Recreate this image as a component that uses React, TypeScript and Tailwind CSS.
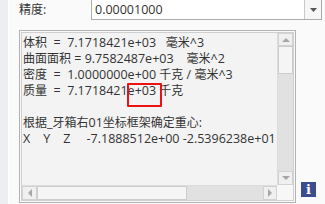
import React from "react";

const lines = [
  "体积  =  7.1718421e+03   毫米^3",
  "曲面面积 = 9.7582487e+03    毫米^2",
  "密度  =  1.0000000e+00 千克 / 毫米^3",
  "质量  =  7.1718421e+03 千克",
  "",
  "根据_牙箱右01坐标框架确定重心:",
  "X    Y    Z     -7.1888512e+00 -2.5396238e+01",
];

// CJK runs keep 12px, latin runs are slightly larger like the original UI font
function Mixed({ text }: { text: string }) {
  const parts = text.split(/([\u3400-\u9fff\uff00-\uffef]+)/);
  return (
    <>
      {parts.map((p, i) =>
        /[\u3400-\u9fff\uff00-\uffef]/.test(p) ? (
          <span key={i} className="text-[12px]">
            {p}
          </span>
        ) : (
          <span key={i}>{p}</span>
        )
      )}
    </>
  );
}

function Arrow({ dir }: { dir: "up" | "down" | "left" | "right" }) {
  const pts = {
    up: "0,5 4,1 8,5",
    down: "0,1 4,5 8,1",
    left: "5,0 1,4 5,8",
    right: "1,0 5,4 1,8",
  }[dir];
  const vertical = dir === "up" || dir === "down";
  return (
    <svg width={vertical ? 8 : 6} height={vertical ? 6 : 8} viewBox={vertical ? "0 0 8 6" : "0 0 6 8"}>
      <polygon points={pts} fill="#a6a6a6" />
    </svg>
  );
}

export default function App() {
  return (
    <div
      className="relative flex h-[204px] w-[325px] overflow-hidden bg-[#fafafa] text-[12.5px] text-[#333333]"
      style={{ fontFamily: '"Open Sans", "Noto Sans CJK SC", sans-serif' }}
    >
      <div className="w-[9px] shrink-0 border-r border-white bg-[#eceef1]" />

      <div className="flex min-w-0 flex-1 flex-col">
        {/* precision row */}
        <div className="flex h-[20px] items-center">
          <span className="w-[82px] whitespace-pre pl-[10px] leading-[16px]">
            <Mixed text="精度:" />
          </span>
          <div className="-mt-[1px] flex h-[21px] w-[231px] border border-[#acacac] bg-white">
            <span className="flex-1 pl-[3px] pt-[1px] leading-[18px]">0.00001000</span>
            <div className="flex w-[17px] items-center justify-center border-l border-[#c8c8c8] bg-[#f6f6f6]">
              <svg width="7" height="4" viewBox="0 0 7 4">
                <polygon points="0,0 7,0 3.5,4" fill="#555" />
              </svg>
            </div>
          </div>
        </div>

        <div className="mt-[10px] flex flex-1">
          {/* text box */}
          <div className="ml-[10px] h-[173px] w-[277px] shrink-0 border border-[#b2b2b2] p-[1px]">
            <div className="grid h-full w-full grid-cols-[minmax(0,1fr)_16px] grid-rows-[minmax(0,1fr)_15px] border border-[#cfcfcf] bg-[#f3f3f3]">
              <div className="min-w-0 overflow-hidden pl-[1px] pt-[2px]">
                {lines.map((l, i) => (
                  <div key={i} className="h-[16px] whitespace-pre leading-[16px]">
                    <Mixed text={l} />
                  </div>
                ))}
              </div>

              {/* vertical scrollbar */}
              <div className="flex flex-col border-l border-[#dcdcdc] bg-[#e1e1e1]">
                <div className="flex h-[13px] items-center justify-center border border-[#d2d2d2] bg-[#f0f0f0]">
                  <Arrow dir="up" />
                </div>
                <div className="h-[28px] border border-[#cdcdcd] bg-[#f5f5f5]" />
                <div className="flex-1" />
                <div className="flex h-[14px] items-center justify-center border border-[#d2d2d2] bg-[#f0f0f0]">
                  <Arrow dir="down" />
                </div>
              </div>

              {/* horizontal scrollbar */}
              <div className="flex border-t border-[#dcdcdc] bg-[#e1e1e1]">
                <div className="flex w-[15px] items-center justify-center border border-[#d2d2d2] bg-[#f0f0f0]">
                  <Arrow dir="left" />
                </div>
                <div className="w-[150px] border border-[#cdcdcd] bg-[#f5f5f5]" />
                <div className="flex-1" />
                <div className="flex w-[14px] items-center justify-center border border-[#d2d2d2] bg-[#f0f0f0]">
                  <Arrow dir="right" />
                </div>
              </div>
              <div className="bg-[#f7f7f7]" />
            </div>
          </div>

          {/* info icon */}
          <div
            className="mb-[7px] ml-[5px] flex h-[15px] w-[15px] items-center justify-center self-end bg-[#3d4c8e] text-[13px] font-bold leading-none text-white"
            style={{ fontFamily: '"DejaVu Serif", serif' }}
          >
            i
          </div>
        </div>
      </div>

      {/* highlight */}
      <div className="absolute left-[127px] top-[83px] h-[24px] w-[35px] rounded-[1px] border-2 border-[#ee1111]" />
    </div>
  );
}
